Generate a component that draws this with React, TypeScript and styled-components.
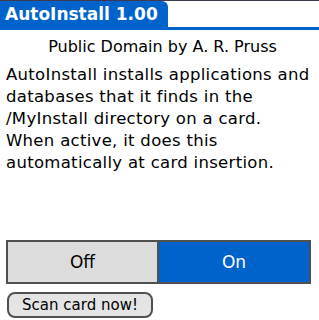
import React from 'react';
import styled, { createGlobalStyle } from 'styled-components';

const Global = createGlobalStyle`
  html, body { margin: 0; padding: 0; background: #fff; }
  body { font-family: "DejaVu Sans", sans-serif; }
`;

const Screen = styled.div`
  width: 319px;
  height: 320px;
  display: flex;
  flex-direction: column;
  background: #fff;
  overflow: hidden;
`;

const TitleBar = styled.div`
  border-top: 1px solid #3a3a50;
  border-bottom: 3px solid #0063cc;
  display: flex;
`;

const TitleTab = styled.div`
  width: 168px;
  height: 26px;
  background: #0063cc;
  border-top-right-radius: 6px;
  color: #fff;
  font-weight: bold;
  font-size: 17px;
  line-height: 26px;
  padding-left: 5px;
  box-sizing: border-box;
  white-space: nowrap;
`;

const Body = styled.div`
  padding: 6px 0 0 6px;
  color: #000;
  font-size: 16.5px;
  white-space: nowrap;
`;

const Credit = styled.div`
  text-align: center;
  line-height: 22px;
  margin-bottom: 6px;
  font-size: 16px;
`;

const Para = styled.div`
  line-height: 22px;
  letter-spacing: 0.3px;
`;

const Controls = styled.div`
  margin-top: auto;
  padding: 0 8px 2px 6px;
  display: flex;
  flex-direction: column;
  gap: 8px;
`;

const Segments = styled.div`
  display: flex;
  border: 2px solid #505050;
  height: 40px;
`;

const Segment = styled.div<{ $on?: boolean }>`
  flex: ${(p) => (p.$on ? '150' : '149')};
  display: flex;
  align-items: center;
  justify-content: center;
  font-size: 17px;
  background: ${(p) => (p.$on ? '#0063cc' : '#dcdcdc')};
  color: ${(p) => (p.$on ? '#fff' : '#000')};
  & + & {
    border-left: 2px solid #505050;
  }
`;

const ScanButton = styled.div`
  align-self: flex-start;
  margin-left: 1px;
  width: 146px;
  height: 26px;
  box-sizing: border-box;
  border: 2px solid #505050;
  border-radius: 8px;
  background: #e4e4e4;
  font-size: 15px;
  display: flex;
  align-items: center;
  justify-content: center;
`;

export default function App() {
  return (
    <Screen>
      <Global />
      <TitleBar>
        <TitleTab>AutoInstall 1.00</TitleTab>
      </TitleBar>
      <Body>
        <Credit>Public Domain by A. R. Pruss</Credit>
        <Para>
          AutoInstall installs applications and
          <br />
          databases that it finds in the
          <br />
          /MyInstall directory on a card.
          <br />
          When active, it does this
          <br />
          automatically at card insertion.
        </Para>
      </Body>
      <Controls>
        <Segments>
          <Segment>Off</Segment>
          <Segment $on>On</Segment>
        </Segments>
        <ScanButton>Scan card now!</ScanButton>
      </Controls>
    </Screen>
  );
}
